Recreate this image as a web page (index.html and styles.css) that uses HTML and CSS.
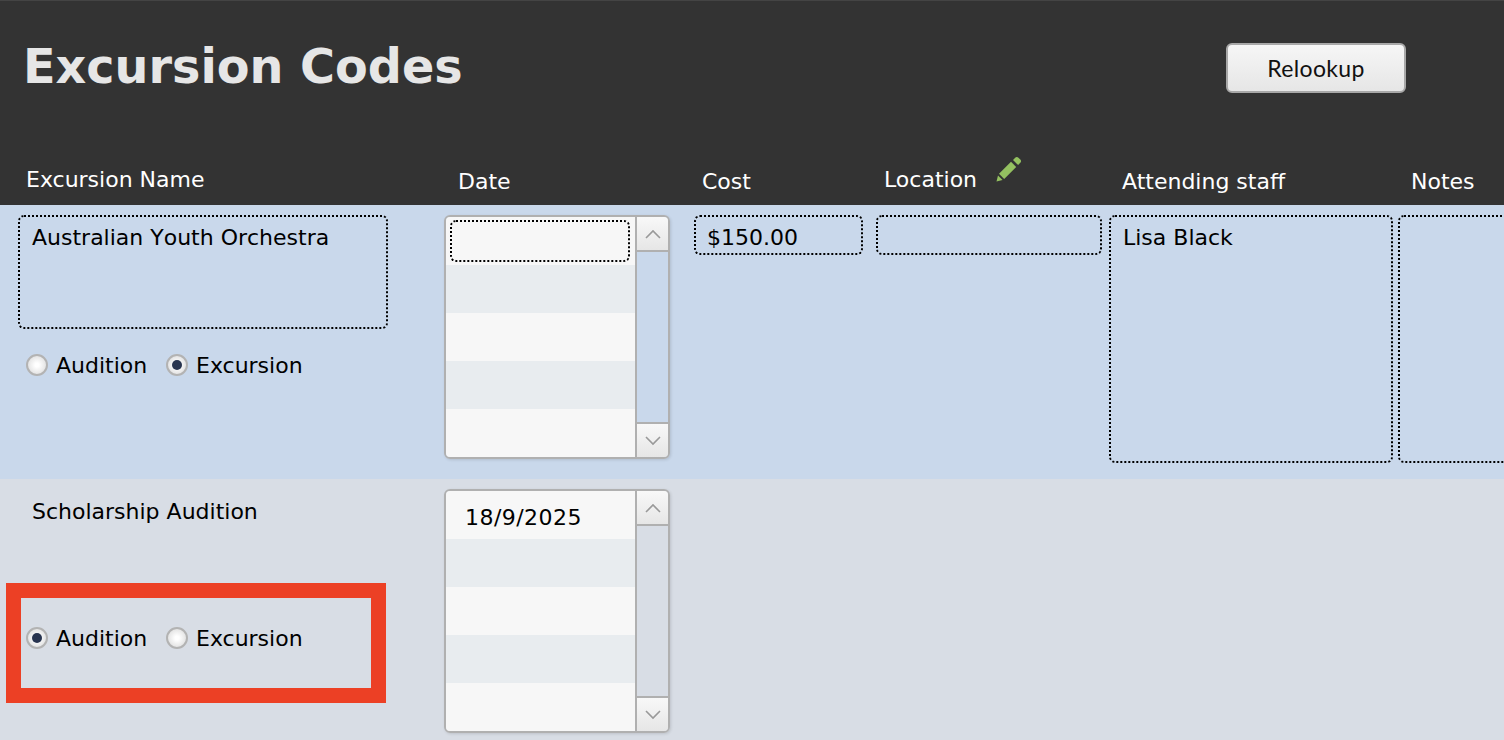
FILE: index.html
```html
<!DOCTYPE html>
<html lang="en">
<head>
  <meta charset="UTF-8">
  <title>Excursion Codes</title>
  <link rel="stylesheet" href="styles.css">
</head>
<body>
  <div class="page">
    <div class="header">
      <div class="title-bar">
        <h1>Excursion Codes</h1>
        <button type="button" class="relookup">Relookup</button>
      </div>
      <div class="labels">
        <div class="label label-name">Excursion Name</div>
        <div class="label label-date">Date</div>
        <div class="label label-cost">Cost</div>
        <div class="label label-location">Location
          <svg class="pencil" width="26" height="26" viewBox="0 0 26 26">
            <polygon points="0.5,25.5 2,19.4 6.6,24" fill="#94c160"/>
            <polygon points="3,17.8 15,5.8 20.2,11 8.2,23" fill="#94c160"/>
            <path d="M17 3.9 L19.2 1.7 Q20.8 0.2 22.4 1.7 L24.3 3.6 Q25.8 5.2 24.3 6.8 L22.1 9 Z" fill="#94c160"/>
          </svg>
        </div>
        <div class="label label-staff">Attending staff</div>
        <div class="label label-notes">Notes</div>
      </div>
    </div>

    <div class="row row-blue">
      <div class="col-name">
        <div class="field field-name">Australian Youth Orchestra</div>
        <div class="radios">
          <span class="radio"></span><span class="radio-text">Audition</span>
          <span class="radio checked"></span><span class="radio-text">Excursion</span>
        </div>
      </div>
      <div class="date-list">
        <div class="date-rows">
          <div class="date-row date-focus"><div class="field field-date"></div></div>
          <div class="date-row alt"></div>
          <div class="date-row"></div>
          <div class="date-row alt"></div>
          <div class="date-row"></div>
        </div>
        <div class="scrollbar">
          <div class="scroll-btn"><svg width="20" height="12" viewBox="0 0 20 12"><path d="M3 10 L10 3 L17 10" class="chevron"/></svg></div>
          <div class="scroll-track"></div>
          <div class="scroll-btn btn-down"><svg width="20" height="12" viewBox="0 0 20 12"><path d="M3 2 L10 9 L17 2" class="chevron"/></svg></div>
        </div>
      </div>
      <div class="field field-cost">$150.00</div>
      <div class="field field-location"></div>
      <div class="field field-staff">Lisa Black</div>
      <div class="field field-notes"></div>
    </div>

    <div class="row row-grey">
      <div class="col-name">
        <div class="plain-name">Scholarship Audition</div>
        <div class="radios radios-low">
          <span class="radio checked"></span><span class="radio-text">Audition</span>
          <span class="radio"></span><span class="radio-text">Excursion</span>
        </div>
      </div>
      <div class="date-list">
        <div class="date-rows">
          <div class="date-row date-value">18/9/2025</div>
          <div class="date-row alt"></div>
          <div class="date-row"></div>
          <div class="date-row alt"></div>
          <div class="date-row"></div>
        </div>
        <div class="scrollbar">
          <div class="scroll-btn"><svg width="20" height="12" viewBox="0 0 20 12"><path d="M3 10 L10 3 L17 10" class="chevron"/></svg></div>
          <div class="scroll-track"></div>
          <div class="scroll-btn btn-down"><svg width="20" height="12" viewBox="0 0 20 12"><path d="M3 2 L10 9 L17 2" class="chevron"/></svg></div>
        </div>
      </div>
      <div class="highlight"></div>
    </div>
  </div>
</body>
</html>
```
FILE: styles.css
```css
* {
  box-sizing: border-box;
}
html, body {
  margin: 0;
  padding: 0;
  height: 100%;
  overflow: hidden;
}
body {
  font-family: "DejaVu Sans", Verdana, sans-serif;
  font-size: 22px;
  color: #000;
}
.page {
  width: 1504px;
  height: 740px;
  overflow: hidden;
}
.header {
  height: 205px;
  background: #333;
  border-top: 1px solid #444;
}
.title-bar {
  display: flex;
  height: 149px;
  padding-left: 23px;
}
h1 {
  margin: 35px 0 0;
  width: 1203px;
  height: 62px;
  font-size: 47.7px;
  line-height: 62px;
  font-weight: bold;
  color: #e6e6e6;
}
.relookup {
  width: 180px;
  height: 50px;
  margin-top: 42px;
  padding-bottom: 1px;
  border: 2px solid #a8a8a8;
  border-radius: 6px;
  background: linear-gradient(#f6f6f6, #e6e6e6);
  font-family: Lato, sans-serif;
  font-size: 23px;
  letter-spacing: 0.35px;
  color: #111;
}
.labels {
  display: flex;
  padding-left: 26px;
}
.label {
  color: #fff;
  line-height: 28px;
  white-space: nowrap;
}
.label-name { width: 432px; margin-top: 16px; }
.label-date { width: 244px; margin-top: 18px; }
.label-cost { width: 182px; margin-top: 18px; }
.label-location { width: 238px; margin-top: 16px; position: relative; }
.label-staff { width: 289px; margin-top: 18px; }
.label-notes { margin-top: 18px; }
.pencil {
  position: absolute;
  left: 112px;
  top: -10px;
}

.row {
  display: flex;
  position: relative;
  padding-left: 18px;
}
.row > * {
  flex-shrink: 0;
}
.row-blue {
  height: 274px;
  padding-top: 10px;
  background: #c9d8eb;
}
.row-grey {
  height: 261px;
  padding-top: 10px;
  background: #d8dde5;
}
.col-name {
  width: 426px;
}
.field {
  border: 2px dotted #000;
  border-radius: 6px;
  padding: 6px 12px;
  line-height: 30px;
}
.field-name {
  width: 370px;
  height: 114px;
  font-kerning: none;
}
.plain-name {
  padding: 8px 14px 6px;
  line-height: 30px;
}
.radios {
  display: flex;
  align-items: center;
  margin-top: 25px;
  padding-left: 8px;
  height: 22px;
}
.radios-low {
  margin-top: 94px;
}
.radio {
  width: 22px;
  height: 22px;
  border: 2px solid #b3b3b3;
  border-radius: 50%;
  background: radial-gradient(circle at 50% 50%, #fff 15%, #d6d6d6 100%);
  display: flex;
  align-items: center;
  justify-content: center;
}
.radio.checked::after {
  content: "";
  width: 10px;
  height: 10px;
  border-radius: 50%;
  background: #28344f;
}
.radio-text {
  margin-left: 8px;
  margin-right: 20px;
  width: 90px;
}
.date-list {
  display: flex;
  width: 226px;
  height: 244px;
  border: 2px solid #b0b0b0;
  border-radius: 6px;
  overflow: hidden;
  box-shadow: 1px 1px 3px rgba(0, 0, 0, 0.12);
}
.date-rows {
  width: 191px;
  border-right: 2px solid #b0b0b0;
  flex-shrink: 0;
}
.date-row {
  height: 48px;
  background: #f7f7f7;
}
.date-row.alt {
  background: #e8ecef;
}
.date-focus {
  padding: 3px 0 0 4px;
}
.date-value {
  padding-left: 19px;
  line-height: 54px;
  letter-spacing: 0.45px;
}
.field-date {
  width: 180px;
  height: 42px;
}
.scrollbar {
  flex: 1;
  display: flex;
  flex-direction: column;
}
.scroll-btn {
  height: 35px;
  background: linear-gradient(#f8f8f8, #e6e6e6);
  border-bottom: 2px solid #b0b0b0;
  display: flex;
  align-items: center;
  justify-content: center;
}
.btn-down {
  border-bottom: 0;
  border-top: 2px solid #b0b0b0;
}
.scroll-track {
  flex: 1;
}
.chevron {
  fill: none;
  stroke: #999;
  stroke-width: 1.6;
}
.field-cost {
  width: 169px;
  height: 40px;
  margin-left: 24px;
  padding-left: 11px;
}
.field-location {
  width: 226px;
  height: 40px;
  margin-left: 13px;
}
.field-staff {
  width: 284px;
  height: 248px;
  margin-left: 7px;
}
.field-notes {
  width: 200px;
  height: 248px;
  margin-left: 5px;
}
/* red annotation drawn over the second row */
.highlight {
  position: absolute;
  left: 6px;
  top: 104px;
  width: 380px;
  height: 120px;
  border: 15px solid #ec4025;
}
```
